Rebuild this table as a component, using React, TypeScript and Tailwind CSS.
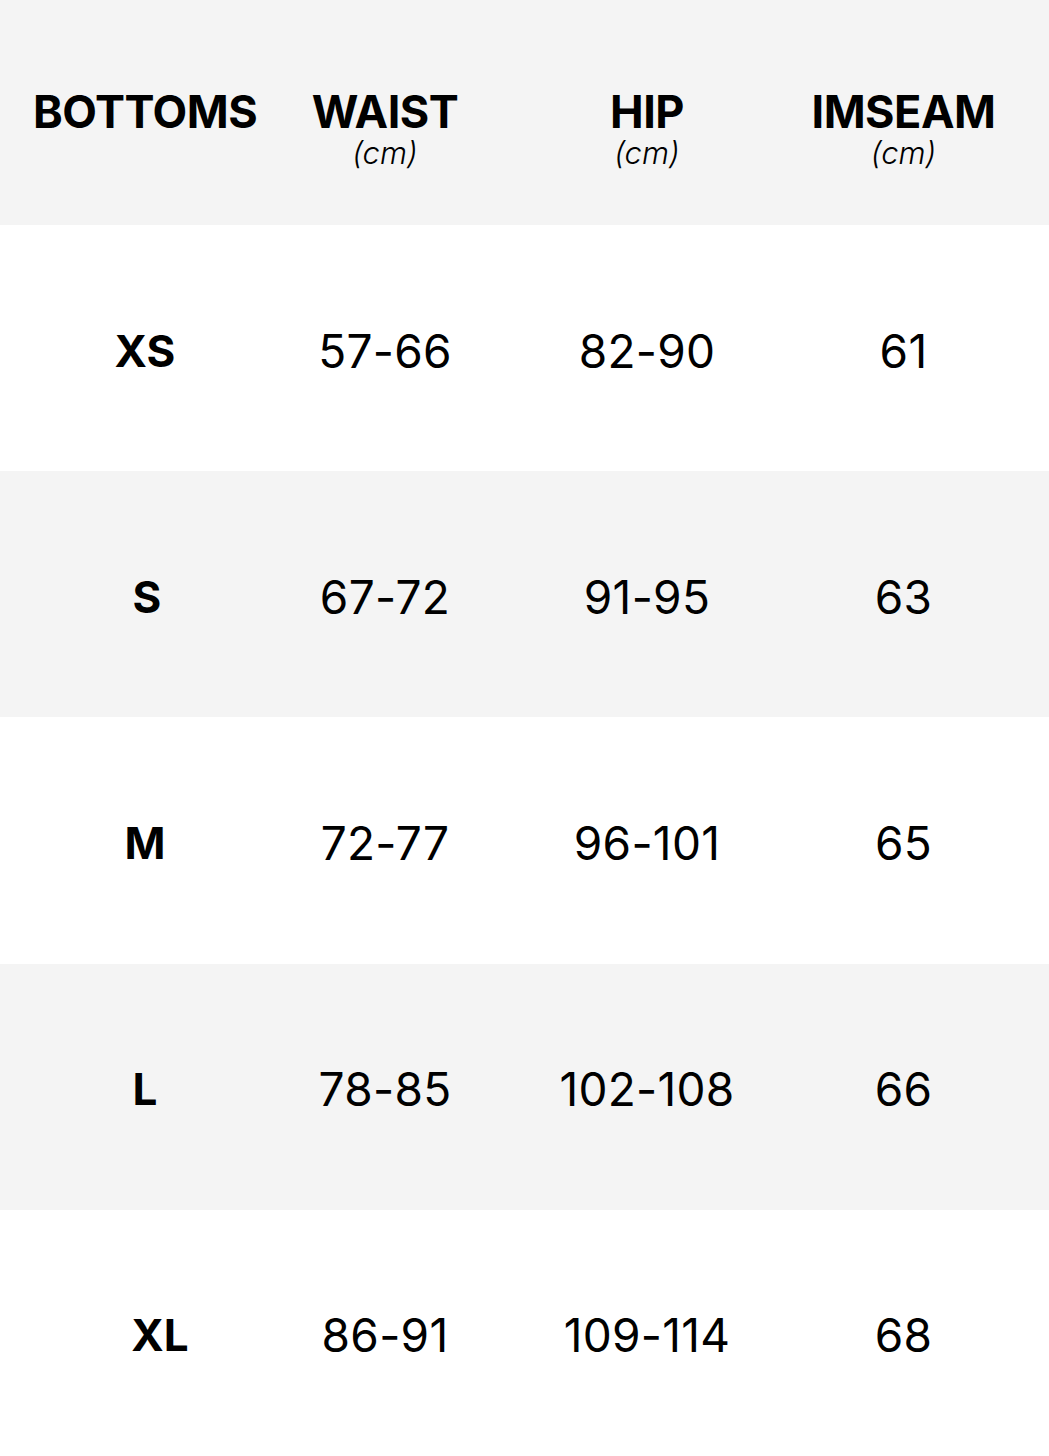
import React from "react";

const rows = [
  { size: "XS", waist: "57-66", hip: "82-90", inseam: "61", gray: false, pad: "" },
  { size: "S", waist: "67-72", hip: "91-95", inseam: "63", gray: true, pad: "pl-[4px]" },
  { size: "M", waist: "72-77", hip: "96-101", inseam: "65", gray: false, pad: "" },
  { size: "L", waist: "78-85", hip: "102-108", inseam: "66", gray: true, pad: "" },
  { size: "XL", waist: "86-91", hip: "109-114", inseam: "68", gray: false, pad: "pl-[30px]" },
];

const font = { fontFamily: "Inter, 'Noto Sans', sans-serif" };

function Head({ title, unit }: { title: string; unit?: string }) {
  return (
    <div className="flex flex-col items-center">
      <span className="text-[45px] font-bold leading-none tracking-[-0.5px] text-black">{title}</span>
      {unit && <span className="mt-[3px] text-[31px] font-light italic leading-none text-black">{unit}</span>}
    </div>
  );
}

export default function App() {
  return (
    <div className="w-[1049px] min-h-[1456px] bg-white" style={font}>
      <div className="flex h-[225px] items-start bg-[#f4f4f4] pt-[89px]">
        <div className="flex w-[290px] justify-center">
          <Head title="BOTTOMS" />
        </div>
        <div className="flex w-[190px] justify-center">
          <Head title="WAIST" unit="(cm)" />
        </div>
        <div className="flex w-[334px] justify-center">
          <Head title="HIP" unit="(cm)" />
        </div>
        <div className="flex w-[179px] justify-center">
          <Head title="IMSEAM" unit="(cm)" />
        </div>
      </div>
      {rows.map((r) => (
        <div
          key={r.size}
          className={`flex h-[246.2px] items-center pt-[5px] ${r.gray ? "bg-[#f4f4f4]" : "bg-white"}`}
        >
          <div className={`flex w-[290px] justify-center ${r.pad}`}>
            <span className="text-[44px] font-bold leading-none text-black">{r.size}</span>
          </div>
          <div className="flex w-[190px] justify-center">
            <span className="text-[46px] font-normal leading-none tracking-[0.3px] text-black">{r.waist}</span>
          </div>
          <div className="flex w-[334px] justify-center">
            <span className="text-[46px] font-normal leading-none tracking-[0.3px] text-black">{r.hip}</span>
          </div>
          <div className="flex w-[179px] justify-center">
            <span className="text-[46px] font-normal leading-none tracking-[0.3px] text-black">{r.inseam}</span>
          </div>
        </div>
      ))}
    </div>
  );
}
